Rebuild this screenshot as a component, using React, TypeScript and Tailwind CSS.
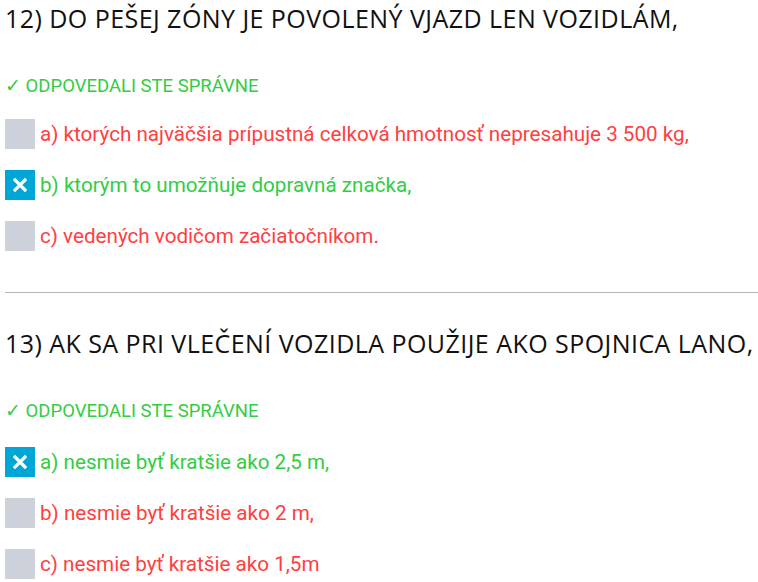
import React from "react";

type Option = { label: string; checked: boolean; correct: boolean };

const QUESTIONS: { title: string; options: Option[] }[] = [
  {
    title: "12) DO PEŠEJ ZÓNY JE POVOLENÝ VJAZD LEN VOZIDLÁM,",
    options: [
      { label: "a) ktorých najväčšia prípustná celková hmotnosť nepresahuje 3 500 kg,", checked: false, correct: false },
      { label: "b) ktorým to umožňuje dopravná značka,", checked: true, correct: true },
      { label: "c) vedených vodičom začiatočníkom.", checked: false, correct: false },
    ],
  },
  {
    title: "13) AK SA PRI VLEČENÍ VOZIDLA POUŽIJE AKO SPOJNICA LANO,",
    options: [
      { label: "a) nesmie byť kratšie ako 2,5 m,", checked: true, correct: true },
      { label: "b) nesmie byť kratšie ako 2 m,", checked: false, correct: false },
      { label: "c) nesmie byť kratšie ako 1,5m", checked: false, correct: false },
    ],
  },
];

function Box({ checked }: { checked: boolean }) {
  if (!checked) return <div className="h-[30px] w-[30px] shrink-0 bg-[#cdd2da]" />;
  return (
    <div className="flex h-[30px] w-[30px] shrink-0 items-center justify-center bg-[#00a6d6]">
      <svg width="16" height="16" viewBox="0 0 16 16">
        <path d="M3 3 L13 13 M13 3 L3 13" stroke="white" strokeWidth="3.2" strokeLinecap="square" />
      </svg>
    </div>
  );
}

function Question({ q, first }: { q: (typeof QUESTIONS)[number]; first: boolean }) {
  return (
    <div className={first ? "pt-[1px]" : "pt-[33px]"}>
      <h2 className="whitespace-nowrap text-[25px] font-medium leading-[34px] tracking-[0.45px] text-[#111] font-['Open_Sans',sans-serif]">
        {q.title}
      </h2>
      <p className="mt-[39px] text-[18.5px] leading-[24px] text-[#33cc44] font-['Roboto',sans-serif]">
        ✓ ODPOVEDALI STE SPRÁVNE
      </p>
      <div className={`${first ? "mt-[21px]" : "mt-[24px]"} flex flex-col gap-[21px]`}>
        {q.options.map((o) => (
          <div key={o.label} className="flex items-center gap-[5px]">
            <Box checked={o.checked} />
            <span
              className={`whitespace-nowrap text-[20.65px] leading-[30px] font-['Roboto',sans-serif] ${
                o.correct ? "text-[#33cc44]" : "text-[#ff4040]"
              }`}
            >
              {o.label}
            </span>
          </div>
        ))}
      </div>
    </div>
  );
}

export default function App() {
  return (
    <div className="min-h-[582px] bg-white pl-[5px]">
      <Question q={QUESTIONS[0]} first />
      <div className="mt-[41px] h-[1px] bg-[#b4b4b4]" />
      <Question q={QUESTIONS[1]} first={false} />
    </div>
  );
}
